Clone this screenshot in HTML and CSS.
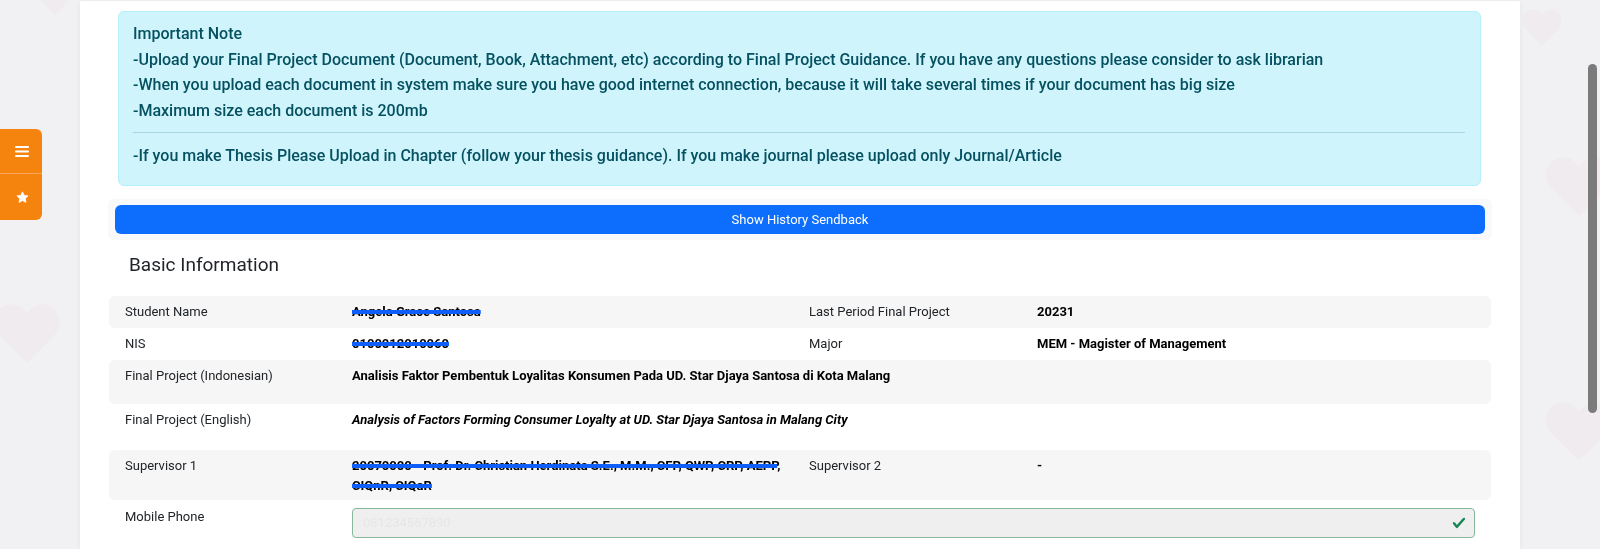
FILE: index.html
```html
<!DOCTYPE html>
<html lang="en">
<head>
    <meta charset="UTF-8">
    <meta name="viewport" content="width=device-width, initial-scale=1.0">
    <title>Upload Final Project</title>
    <link rel="stylesheet" href="styles.css">
</head>
<body>
    <!-- background hearts -->
    <div class="bg-hearts">
        <svg class="heart h1" viewBox="0 0 32 29"><path d="M16 29 3 16C-1 12-1 5 4 2s9-1 12 3c3-4 8-6 12-3s5 10 1 14z"/></svg>
        <svg class="heart h2" viewBox="0 0 32 29"><path d="M16 29 3 16C-1 12-1 5 4 2s9-1 12 3c3-4 8-6 12-3s5 10 1 14z"/></svg>
        <svg class="heart h3" viewBox="0 0 32 29"><path d="M16 29 3 16C-1 12-1 5 4 2s9-1 12 3c3-4 8-6 12-3s5 10 1 14z"/></svg>
        <svg class="heart h4" viewBox="0 0 32 29"><path d="M16 29 3 16C-1 12-1 5 4 2s9-1 12 3c3-4 8-6 12-3s5 10 1 14z"/></svg>
        <svg class="heart h5" viewBox="0 0 32 29"><path d="M16 29 3 16C-1 12-1 5 4 2s9-1 12 3c3-4 8-6 12-3s5 10 1 14z"/></svg>
    </div>

    <div class="side-tools">
        <button class="side-btn">
            <svg viewBox="0 0 14 12" width="14" height="13" fill="none" stroke="#fff" stroke-width="2" stroke-linecap="round">
                <path d="M1 1.5h12M1 6h12M1 10.5h12"/>
            </svg>
        </button>
        <button class="side-btn">
            <svg viewBox="0 0 24 24" width="13" height="13" fill="#fff">
                <path d="M12 1.5l3.1 6.6 7.2.9-5.3 5 1.4 7.1L12 17.6l-6.4 3.5 1.4-7.1-5.3-5 7.2-.9z" stroke="#fff" stroke-width="1.5" stroke-linejoin="round"/>
            </svg>
        </button>
    </div>

    <main class="card">
        <div class="alert-note">
            <p>Important Note</p>
            <p>-Upload your Final Project Document (Document, Book, Attachment, etc) according to Final Project Guidance. If you have any questions please consider to ask librarian</p>
            <p>-When you upload each document in system make sure you have good internet connection, because it will take several times if your document has big size</p>
            <p>-Maximum size each document is 200mb</p>
            <hr>
            <p>-If you make Thesis Please Upload in Chapter (follow your thesis guidance). If you make journal please upload only Journal/Article</p>
        </div>

        <div class="history-bar">
            <button class="btn-history">Show History Sendback</button>
        </div>

        <h5 class="section-title">Basic Information</h5>

        <div class="info-table">
            <div class="info-row striped">
                <div class="cell">Student Name</div>
                <div class="cell value"><span class="redacted">Angela Grace Santosa</span></div>
                <div class="cell">Last Period Final Project</div>
                <div class="cell value">20231</div>
            </div>
            <div class="info-row">
                <div class="cell">NIS</div>
                <div class="cell value"><span class="redacted">0100012010060</span></div>
                <div class="cell">Major</div>
                <div class="cell value">MEM - Magister of Management</div>
            </div>
            <div class="info-row striped row-title">
                <div class="cell">Final Project (Indonesian)</div>
                <div class="cell value wide">Analisis Faktor Pembentuk Loyalitas Konsumen Pada UD. Star Djaya Santosa di Kota Malang</div>
            </div>
            <div class="info-row row-title-en">
                <div class="cell">Final Project (English)</div>
                <div class="cell value wide"><em>Analysis of Factors Forming Consumer Loyalty at UD. Star Djaya Santosa in Malang City</em></div>
            </div>
            <div class="info-row striped row-supervisor">
                <div class="cell">Supervisor 1</div>
                <div class="cell value"><span class="redacted">20070000 - Prof. Dr. Christian Herdinata S.E., M.M., CFP, QWP, CRP, AEPP</span>,<br><span class="redacted">CIQnR, CIQaR</span></div>
                <div class="cell">Supervisor 2</div>
                <div class="cell value">-</div>
            </div>
            <div class="info-row row-phone">
                <div class="cell">Mobile Phone</div>
                <div class="cell wide">
                    <div class="phone-field">
                        <input type="text" class="phone-input" value="081234567890" readonly>
                        <svg class="valid-icon" viewBox="0 0 8 8" width="14" height="14"><path fill="#198754" d="M2.3 6.73.6 4.53c-.4-1.040.46-1.4 1.1-.8l1.1 1.4 3.4-3.8c.6-.63 1.6-.27 1.2.7l-4 4.6c-.43.5-.8.4-1.1.1z"/></svg>
                    </div>
                </div>
            </div>
        </div>
    </main>

    <div class="scroll-thumb"></div>
</body>
</html>
```

FILE: styles.css
```css
* {
    box-sizing: border-box;
}

html, body {
    height: 100%;
    overflow: hidden;
}

body {
    margin: 0;
    background-color: #f1f1f4;
    font-family: Roboto, "Liberation Sans", sans-serif;
    color: #212529;
}

/* Background hearts */
.bg-hearts {
    position: fixed;
    inset: 0;
    z-index: 0;
}

.heart {
    position: absolute;
    fill: #efebee;
}

.h1 { left: 30px; top: -40px; width: 50px; height: 64px; }
.h2 { left: -6px; top: 300px; width: 66px; height: 66px; }
.h3 { left: 1522px; top: -6px; width: 40px; height: 66px; }
.h4 { left: 1546px; top: 156px; width: 66px; height: 60px; }
.h5 { left: 1546px; top: 400px; width: 66px; height: 62px; }

/* Floating side tools */
.side-tools {
    position: fixed;
    left: 0;
    top: 129px;
    width: 42px;
    display: flex;
    flex-direction: column;
    background-color: #f5840f;
    border-radius: 0 6px 6px 0;
    z-index: 5;
    overflow: hidden;
}

.side-btn {
    height: 44px;
    border: none;
    background: none;
    display: flex;
    align-items: center;
    justify-content: center;
    padding: 0 0 0 2px;
    cursor: pointer;
}

.side-btn + .side-btn {
    border-top: 1px solid #f7a65c;
    height: 47px;
}

/* Main card */
.card {
    position: relative;
    z-index: 1;
    width: 1440px;
    margin: 1px auto 0;
    padding: 10px 28px 40px;
    background-color: #fff;
    box-shadow: 0 0 6px rgba(0, 0, 0, 0.05);
}

.alert-note {
    margin: 0 11px 0 10px;
    padding: 9px 15px 16px 14px;
    background-color: #cff4fc;
    border: 1px solid #b6effb;
    border-radius: 6px;
    color: #055160;
    font-size: 16px;
    font-weight: 500;
    line-height: 25.5px;
}

.alert-note p {
    margin: 0;
}

.alert-note hr {
    margin: 9px 0 10px;
    border: 0;
    border-top: 1px solid #a9d7e0;
}

.history-bar {
    margin-top: 13px;
    padding: 6px 7px;
    background-color: #f8f9fa;
    border-radius: 6px;
}

.btn-history {
    display: block;
    width: 100%;
    padding: 5px 12px;
    border: none;
    border-radius: 6px;
    background-color: #0d6efd;
    color: #fff;
    font-family: inherit;
    font-size: 13px;
    line-height: 19px;
    cursor: pointer;
}

.section-title {
    margin: 13px 0 19px;
    padding-left: 21px;
    font-size: 19px;
    font-weight: 400;
    line-height: 24px;
}

/* Info table */
.info-table {
    margin: 0 1px;
    font-size: 13px;
    line-height: 20px;
}

.info-row {
    display: grid;
    grid-template-columns: 227px 457px 228px 1fr;
    border-radius: 6px;
}

.info-row.striped {
    background-color: #f6f6f6;
}

.cell {
    padding: 6px 16px;
}

.cell.value {
    font-weight: 700;
    color: #000;
    padding-right: 2px;
}

.cell.wide {
    grid-column: 2 / 5;
}

.row-title .cell {
    padding-bottom: 18px;
}

.row-title-en .cell {
    padding-bottom: 20px;
}

.row-supervisor .cell {
    padding-bottom: 4px;
}

.row-phone .cell {
    padding-top: 7px;
}

.row-phone .cell.wide {
    padding-top: 8px;
}

.redacted {
    text-decoration: line-through;
    text-decoration-color: #0f5ef7;
    text-decoration-thickness: 4px;
}

.phone-field {
    position: relative;
}

.phone-input {
    display: block;
    width: 100%;
    height: 30px;
    padding: 4px 34px 4px 10px;
    border: 1px solid #86b89b;
    border-radius: 4px;
    background-color: #efefef;
    color: #e6e6e6;
    font-family: inherit;
    font-size: 13px;
}

.valid-icon {
    position: absolute;
    right: 9px;
    top: 8px;
}

.scroll-thumb {
    position: fixed;
    right: 3px;
    top: 64px;
    width: 9px;
    height: 349px;
    border-radius: 5px;
    background-color: #7b7b7b;
    z-index: 10;
}
```
